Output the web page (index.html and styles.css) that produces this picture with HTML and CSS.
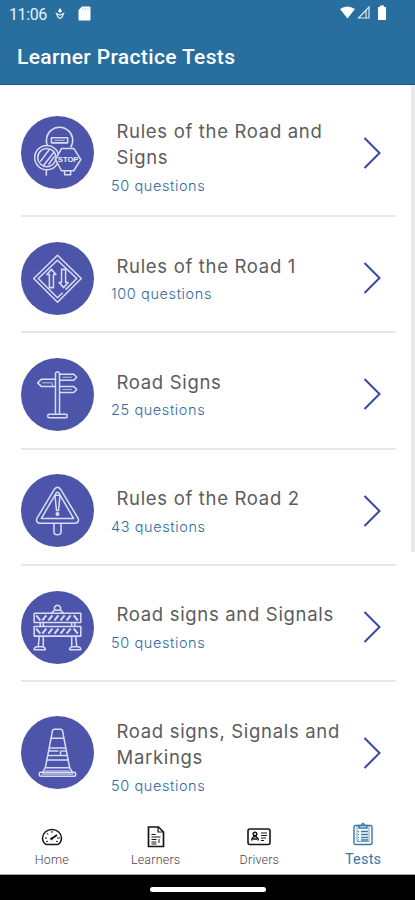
FILE: index.html
```html
<!DOCTYPE html>
<html lang="en">
<head>
    <meta charset="UTF-8">
    <meta name="viewport" content="width=device-width, initial-scale=1">
    <title>Learner Practice Tests</title>
    <link rel="stylesheet" href="styles.css">
</head>
<body>
    <header class="header">
        <div class="status">
            <span class="time">11:06</span>
            <svg class="mic" width="10" height="14" viewBox="0 0 10 14"><path d="M5 1l2 3-2 2-2-2z" fill="#fff"/><path d="M1.500 6.500L3 10l2 1.500L7 10l1.500-3.500L5 8z" fill="none" stroke="#dce8f1" stroke-width="1.300"/></svg>
            <svg class="card" width="13" height="15" viewBox="0 0 13 15"><path d="M4 .5h7.500Q12.500.5 12.500 1.500v12q0 1-1 1h-10q-1 0-1-1V4z" fill="#fff"/><path d="M5 2v2M7.500 2v2M10 2v2" stroke="#b9cfe1"/></svg>
            <svg class="signals" width="48" height="16" viewBox="0 0 48 16"><path d="M1 4q7-5 15 0L8.500 13.500z" fill="#fff"/><path d="M19.500 13L30 2v11zM27 5v8" fill="none" stroke="#dce8f1" stroke-width="1.2"/><path d="M39 2h2V.5h4V2h2v13h-8z" fill="#fff"/></svg>
        </div>
        <h1>Learner Practice Tests</h1>
    </header>

    <main class="list">
        <div class="row tall">
            <svg class="icon" viewBox="0 0 72 72">
                <circle class="disc" cx="36" cy="36" r="36"/>
                <path d="M27 31a13 13 0 1 1 22 0M25 53v6M43 54v4h6v-4"/>
                <rect x="30" y="21.500" width="16" height="5"/>
                <path d="M33 24h10" class="thin"/>
                <circle class="cover" cx="25.500" cy="41" r="12"/>
                <circle cx="25.500" cy="41" r="9"/>
                <path d="M19 45l9-12M22 49l11-14M27 48l6-8"/>
                <path class="cover" d="M40 32h12l7 11-7 11H40l-6-11z"/>
                <text x="46.500" y="45.500">STOP</text>
            </svg>
            <div class="info"><h2>Rules of the Road and<br>Signs</h2><p>50 questions</p></div>
            <svg class="chevron" viewBox="0 0 18 32"><path d="M1.500 1L16.500 16l-15 15"/></svg>
        </div>
        <div class="row">
            <svg class="icon" viewBox="0 0 72 72">
                <circle class="disc" cx="36" cy="36" r="36"/>
                <path d="M36 13l23.500 23L36 59.500 12.500 36z"/>
                <path d="M41 50l-5 5L17 36l19-18 19 18-11 11"/>
                <path d="M28 45V32h-2.500l4.500-5 4.500 5H32v13zM40 27v13h-2.500l4.500 5 4.500-5H44V27z"/>
            </svg>
            <div class="info"><h2>Rules of the Road 1</h2><p>100 questions</p></div>
            <svg class="chevron" viewBox="0 0 18 32"><path d="M1.500 1L16.500 16l-15 15"/></svg>
        </div>
        <div class="row">
            <svg class="icon" viewBox="0 0 72 72">
                <circle class="disc" cx="36" cy="36" r="36"/>
                <path d="M34 55V15q2-3 4 0v40M38 16h14l3 3-3 3H38M38 28h14l3 3-3 3H38M34 21H20l-3.500 3.500L20 28h14"/>
                <path class="thin" d="M41 19h9M41 31h9M21 24.500h10M31 25v3"/>
                <rect x="26.500" y="55.500" width="19" height="3.500" rx="1"/>
            </svg>
            <div class="info"><h2>Road Signs</h2><p>25 questions</p></div>
            <svg class="chevron" viewBox="0 0 18 32"><path d="M1.500 1L16.500 16l-15 15"/></svg>
        </div>
        <div class="row">
            <svg class="icon" viewBox="0 0 72 72">
                <circle class="disc" cx="36" cy="36" r="36"/>
                <path d="M33 15q3-4 6 0l17.500 29q1 4-3 4.500h-35q-4-.5-3-4.500z"/>
                <path d="M34.500 19q1.500-2 3 0l14.500 25H20z"/>
                <path d="M33.500 21h5L37 36h-2zM32.500 49v8q0 3 3.500 3t3.500-3v-8"/>
                <circle class="dot" cx="36" cy="39.500" r="2"/>
            </svg>
            <div class="info"><h2>Rules of the Road 2</h2><p>43 questions</p></div>
            <svg class="chevron" viewBox="0 0 18 32"><path d="M1.500 1L16.500 16l-15 15"/></svg>
        </div>
        <div class="row">
            <svg class="icon" viewBox="0 0 72 72">
                <circle class="disc" cx="36" cy="36" r="36"/>
                <path d="M30 22l3-3v-3q3-4 6 0v3l3 3M33 19h6"/>
                <rect x="13" y="22" width="46" height="9"/>
                <rect x="13" y="35" width="46" height="9.500"/>
                <path class="stripe" d="M15 24l4 5M21 29l4-5M27 29l4-5M33 29l4-5M39 29l4-5M45 29l4-5M52 24l4 5M15 37l4 5M21 42l4-5M27 42l4-5M33 42l4-5M39 42l4-5M45 42l4-5M52 37l4 5"/>
                <path d="M19 31v4M22 31v4M50 31v4M53 31v4M18 45l-1 10M22 45v10M50 45v10M54 45l1 10M13 58q0-3 3-3h5q3 0 3 3zM48 58q0-3 3-3h5q3 0 3 3z"/>
            </svg>
            <div class="info"><h2>Road signs and Signals</h2><p>50 questions</p></div>
            <svg class="chevron" viewBox="0 0 18 32"><path d="M1.500 1L16.500 16l-15 15"/></svg>
        </div>
        <div class="row tall">
            <svg class="icon" viewBox="0 0 72 72">
                <circle class="disc" cx="36" cy="36" r="36"/>
                <path d="M31 15q0-2 2-2h6q2 0 2 2l7 36 3 5H21l3-5zM30 22h12M28.500 31.500h15M28 34.500h9M40 34.500h4M39 34v4M27 39h18M26 43.500h20M24 51h24"/>
                <rect x="18" y="55.500" width="36" height="4" rx="1.500"/>
                <path class="thin" d="M24 54h24M20 57.500h32"/>
            </svg>
            <div class="info"><h2>Road signs, Signals and<br>Markings</h2><p>50 questions</p></div>
            <svg class="chevron" viewBox="0 0 18 32"><path d="M1.500 1L16.500 16l-15 15"/></svg>
        </div>
        <div class="scrollbar"></div>
    </main>

    <nav class="tabs">
        <div class="tab">
            <svg width="22" height="22" viewBox="0 0 22 22"><path d="M5 18.500Q1.500 16 1.500 12a9.500 8.500 0 0 1 19 0q0 4-3.500 6.500z" stroke-width="1.5"/><path d="M11 5v2M6 7l1 1.500M4 12h2M16 12h3M5 16l2-1M17 16l-2-1" stroke-width="1"/><path d="M10 13l6-4" stroke-width="2"/><circle cx="10.500" cy="12.800" r="1"/></svg>
            <span>Home</span>
        </div>
        <div class="tab">
            <svg width="22" height="22" viewBox="0 0 22 22"><path d="M3.500 1h10l5 5v14.500h-15z" stroke-width="1.700"/><path d="M13 1v5h5" stroke-width="1.200"/><path d="M6.500 8.500h4M6.500 11h9M6.500 13.500h5M6.500 16h5M14 13v4M6.500 18h5" stroke-width="1"/></svg>
            <span>Learners</span>
        </div>
        <div class="tab">
            <svg width="24" height="22" viewBox="0 0 24 22"><rect x="1" y="3" width="22" height="15.500" rx="2" stroke-width="1.600"/><circle cx="8" cy="8" r="1.800" stroke-width="1.500"/><path d="M4.500 14.500q1-4 3.500-4t3.500 4M6 13h4" stroke-width="1.500"/><path d="M14 7h6M14 9.500h6M14 12h5M14 14.500h3" stroke-width="1"/></svg>
            <span>Drivers</span>
        </div>
        <div class="tab active">
            <svg width="20" height="24" viewBox="0 0 20 24"><rect x="1" y="3.500" width="18" height="19" rx="1.500" stroke-width="1.400"/><path d="M4 4v15.500h12V4" stroke-width=".7"/><path d="M6 6V3.500h2.500Q10-.5 11.500 3.500H14V6z" stroke-width="1.500"/><path d="M8 9.500h7M8 12.500h7M8 15.500h7M8 18h7" stroke-width="1.300"/><path d="M5 9.500h1M5 12.500h1M5 15.500h1M5 18h1" stroke-width="1.200"/></svg>
            <span>Tests</span>
        </div>
    </nav>
    <footer class="gesture"><div class="pill"></div></footer>
</body>
</html>
```

FILE: styles.css
```css
* {
    box-sizing: border-box;
}

html, body {
    margin: 0;
    padding: 0;
}

body {
    width: 415px;
    height: 900px;
    display: flex;
    flex-direction: column;
    overflow: hidden;
    background: #fff;
    font-family: Inter, sans-serif;
}

h1, h2, p {
    margin: 0;
    white-space: nowrap;
}

.header {
    height: 85px;
    flex: none;
    background: #286e9f;
    border-bottom: 1px solid #175887;
    color: #fff;
    font-family: Roboto, sans-serif;
}

.status {
    display: flex;
    align-items: center;
    height: 28px;
    padding: 0 28px 0 9px;
}

.time {
    width: 46px;
    font-size: 16px;
    letter-spacing: -0.4px;
    color: #e9f1f7;
}

.card {
    margin-left: 13px;
    margin-top: -1px;
}

.signals {
    margin-left: auto;
    margin-top: -2px;
}

h1 {
    padding: 17px 0 0 17px;
    font-size: 21px;
    line-height: 24px;
    font-weight: 500;
    letter-spacing: 0.35px;
}

.list {
    position: relative;
    flex: 1;
    min-height: 0;
    overflow: hidden;
    padding: 0 19px 0 21px;
}

.row {
    display: grid;
    grid-template-columns: 73px 1fr 18px;
    column-gap: 17px;
    align-items: center;
    height: 116.3px;
    padding: 24.5px 14.5px 16.5px 0;
    border-bottom: 2.500px solid #e7e7e7;
}

.row.tall {
    height: 135px;
}

.row:first-child {
    margin-top: -3px;
}

.icon {
    width: 73px;
    height: 73px;
    fill: none;
    stroke: #d9dcf5;
    stroke-width: 1.500;
    stroke-linejoin: round;
}

.icon .disc {
    fill: #4c55a9;
    stroke: none;
}

.icon .cover {
    fill: #4c55a9;
}

.icon .thin {
    stroke-width: 0.8;
}

.icon .stripe {
    stroke-width: 2;
}

.icon .dot {
    fill: #d9dcf5;
    stroke: none;
}

.icon text {
    fill: #eef0ff;
    stroke: none;
    font: bold 7.5px "Liberation Sans", sans-serif;
    text-anchor: middle;
}

.info {
    align-self: start;
    padding-top: 11px;
}

h2 {
    padding-left: 5.5px;
    font-size: 18.5px;
    line-height: 26.5px;
    font-weight: 400;
    letter-spacing: 0.68px;
    color: #5c5c5c;
}

.info p {
    margin-top: 3px;
    font-size: 14.5px;
    line-height: 24px;
    font-weight: 300;
    letter-spacing: 0.6px;
    color: #33699f;
}

.chevron {
    width: 18px;
    height: 32px;
    margin-left: -1px;
    fill: none;
    stroke: #3546a5;
    stroke-width: 2;
}

.scrollbar {
    position: absolute;
    top: 0;
    right: 0;
    width: 4px;
    height: 467px;
    background: #e9e9e9;
}

.tabs {
    display: grid;
    grid-template-columns: repeat(4, 1fr);
    flex: none;
    height: 75px;
    background: #fff;
    border-bottom: 1px solid #aaa;
    font-family: Roboto, sans-serif;
}

.tab {
    display: flex;
    flex-direction: column;
    align-items: center;
    padding-top: 26px;
    font-size: 12.5px;
    line-height: 16px;
    font-weight: 300;
    letter-spacing: 0.2px;
    color: #444;
}

.tab svg {
    fill: none;
    stroke: #161616;
    margin-bottom: 4px;
}

.tab.active {
    padding-top: 22px;
    font-size: 14.5px;
    font-weight: 400;
    color: #3978a9;
}

.tab.active svg {
    stroke: #3978a9;
    margin-bottom: 6px;
}

.gesture {
    display: flex;
    justify-content: center;
    flex: none;
    height: 25px;
    padding-top: 12px;
    background: #000;
}

.pill {
    width: 116px;
    height: 5px;
    border-radius: 3px;
    background: #fff;
}
```
